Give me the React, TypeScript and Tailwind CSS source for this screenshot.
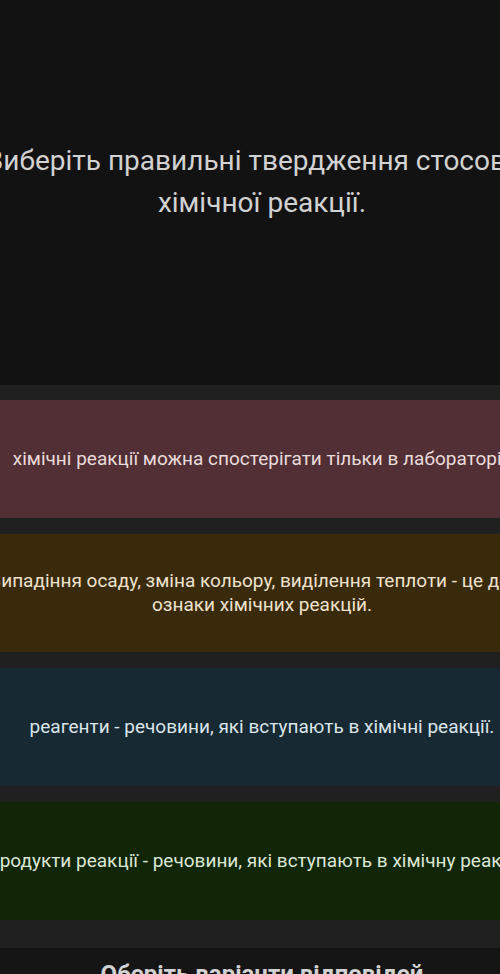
import React from 'react';

interface Answer {
  id: string;
  lines: string[];
  color: string;
  textColor: string;
}

const answers: Answer[] = [
  {
    id: '1',
    lines: ['хімічні реакції можна спостерігати тільки в лабораторії.'],
    color: 'bg-[#522f34]',
    textColor: 'text-[#eadcdc]',
  },
  {
    id: '2',
    lines: ['Випадіння осаду, зміна кольору, виділення теплоти - це деякі', 'ознаки хімічних реакцій.'],
    color: 'bg-[#3a2a0c]',
    textColor: 'text-[#eee2cc]',
  },
  {
    id: '3',
    lines: ['реагенти - речовини, які вступають в хімічні реакції.'],
    color: 'bg-[#172932]',
    textColor: 'text-[#dbe5ea]',
  },
  {
    id: '4',
    lines: ['Продукти реакції - речовини, які вступають в хімічну реакцію.'],
    color: 'bg-[#102606]',
    textColor: 'text-[#dde7d6]',
  },
];

const App: React.FC = () => {
  return (
    <div className="min-h-screen w-full overflow-hidden bg-[#121212] font-['Roboto','Noto_Sans',sans-serif]">
      <div className="w-[560px] ml-[-18px]">
        {/* Question */}
        <div className="h-[385px] pt-[140px] flex justify-center">
          <p className="shrink-0 whitespace-nowrap text-center text-[28px] leading-[42px] text-[#d2d2d2]">
            Виберіть правильні твердження стосовно
            <br />
            хімічної реакції.
          </p>
        </div>

        {/* Answers */}
        <div className="bg-[#202020] pt-[15px] pb-[28px] flex flex-col gap-[16px]">
          {answers.map((answer) => (
            <div
              key={answer.id}
              className={`h-[118px] flex items-center justify-center ${answer.color}`}
            >
              <p className={`shrink-0 whitespace-nowrap text-center text-[19px] leading-[24px] ${answer.textColor}`}>
                {answer.lines.map((line, i) => (
                  <React.Fragment key={i}>
                    {i > 0 && <br />}
                    {line}
                  </React.Fragment>
                ))}
              </p>
            </div>
          ))}
        </div>

        {/* Footer */}
        <div className="bg-[#151515] pt-[10px] pb-[20px] flex justify-center">
          <p className="text-[24px] leading-[32px] font-bold text-[#d2d2d2]">Оберіть варіанти відповідей</p>
        </div>
      </div>
    </div>
  );
};

export default App;
